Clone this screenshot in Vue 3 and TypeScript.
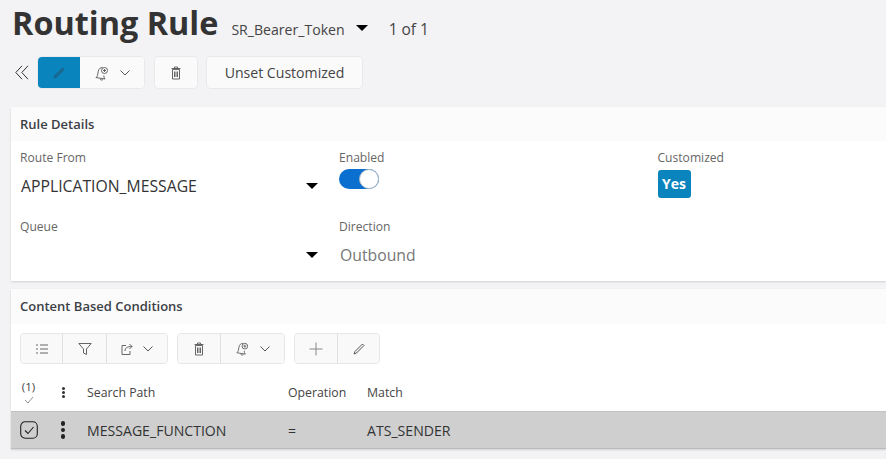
<script setup lang="ts">
const columns: { label: string; value: string; width: string }[] = [
  { label: 'Search Path', value: 'MESSAGE_FUNCTION', width: '201px' },
  { label: 'Operation', value: '=', width: '79px' },
  { label: 'Match', value: 'ATS_SENDER', width: '120px' },
]
</script>

<template>
  <div class="page">
    <header class="title-row">
      <h1>Routing Rule</h1>
      <span class="record">SR_Bearer_Token</span>
      <span class="tri title-tri"></span>
      <span class="count">1 of 1</span>
    </header>

    <div class="toolbar">
      <svg class="collapse" width="14" height="15" viewBox="0 0 14 15" fill="none" stroke="#333" stroke-width="1">
        <path d="M7 .8.800 7.500 7 14.200M13 .8 6.800 7.500 13 14.200" />
      </svg>
      <div class="btn-group">
        <button class="btn primary w42">
          <svg width="14" height="14" viewBox="0 0 14 14" fill="#1f6d94" stroke="#17587a" stroke-width=".8"><path d="M2 12 3 9.500 10.500 2l1.500 1.500L4.500 11z" /></svg>
        </button>
        <button class="btn w64">
          <svg width="16" height="16" viewBox="0 0 16 16" fill="none" stroke="#555" stroke-width=".9"><path d="M2 12.500c1.500-1 1.800-3 2.200-6C4.600 4 6.500 2.300 8.500 2.500M2 12.500l9 1.500c-.8-1-1.200-2.200-1.200-3.500M6 14a1.800 1.800 0 0 0 3 .4" /><circle cx="10.500" cy="5.500" r="3" /><path d="M10.500 4v3M9 5.500h3" /></svg>
          <svg class="chev" width="10" height="6" viewBox="0 0 10 6" fill="none" stroke="#555"><path d="m.5.500 4.500 4.500L9.500.5" /></svg>
        </button>
      </div>
      <button class="btn single w42 gap-l">
        <svg width="14" height="14" viewBox="0 0 14 14" fill="none" stroke="#666"><path d="M3.500 3.500h7V13h-7zM2.500 2.500h9M5.500 2.500V1h3v1.500M5.500 5.500V11M7 5.500V11M8.500 5.500V11" /></svg>
      </button>
      <button class="btn single text-btn">Unset Customized</button>
    </div>

    <section class="card details">
      <h2>Rule Details</h2>
      <div class="form-grid">
        <div class="field">
          <label>Route From</label>
          <div class="select"><span>APPLICATION_MESSAGE</span><i class="tri"></i></div>
        </div>
        <div class="field">
          <label>Enabled</label>
          <div class="toggle"><span class="knob"></span></div>
        </div>
        <div class="field">
          <label>Customized</label>
          <span class="badge">Yes</span>
        </div>
        <div class="field">
          <label>Queue</label>
          <div class="select"><span></span><i class="tri"></i></div>
        </div>
        <div class="field">
          <label>Direction</label>
          <div class="readonly">Outbound</div>
        </div>
      </div>
    </section>

    <section class="card conditions">
      <h2 class="tall">Content Based Conditions</h2>
      <div class="table-tools">
        <div class="btn-group grey">
          <button class="btn w41">
            <svg width="14" height="14" viewBox="0 0 14 14" fill="none" stroke="#666"><path d="M5 3h8M5 7h8M5 11h8M1 3h2M1 7h2M1 11h2" /></svg>
          </button>
          <button class="btn w44">
            <svg width="14" height="14" viewBox="0 0 14 14" fill="none" stroke="#666"><path d="M.8 1.500h12.400L8.500 7v5.500l-3-1.500V7z" /></svg>
          </button>
          <button class="btn w61">
            <svg width="12" height="12" viewBox="0 0 12 12" fill="none" stroke="#666"><path d="M5 2.500H1v9h8V8M4 8c0-3 2-4.500 7-4.500M8.500 1 11 3.500 8.500 6" /></svg>
            <svg class="chev" width="10" height="6" viewBox="0 0 10 6" fill="none" stroke="#555"><path d="m.5.500 4.500 4.500L9.500.5" /></svg>
          </button>
        </div>
        <div class="btn-group grey">
          <button class="btn w42">
            <svg width="14" height="14" viewBox="0 0 14 14" fill="none" stroke="#666"><path d="M3.500 3.500h7V13h-7zM2.500 2.500h9M5.500 2.500V1h3v1.500M5.500 5.500V11M7 5.500V11M8.500 5.500V11" /></svg>
          </button>
          <button class="btn w64">
            <svg width="15" height="15" viewBox="0 0 16 16" fill="none" stroke="#555" stroke-width=".9"><path d="M2 12.500c1.500-1 1.800-3 2.200-6C4.600 4 6.500 2.300 8.500 2.500M2 12.500l9 1.500c-.8-1-1.200-2.200-1.200-3.500M6 14a1.800 1.800 0 0 0 3 .4" /><circle cx="10.500" cy="5.500" r="3" /><path d="M10.500 4v3M9 5.500h3" /></svg>
            <svg class="chev" width="10" height="6" viewBox="0 0 10 6" fill="none" stroke="#555"><path d="m.5.500 4.500 4.500L9.500.5" /></svg>
          </button>
        </div>
        <div class="btn-group grey">
          <button class="btn w42">
            <svg width="14" height="14" viewBox="0 0 14 14" fill="none" stroke="#888"><path d="M7 .5v13M.5 7h13" /></svg>
          </button>
          <button class="btn w42">
            <svg width="14" height="14" viewBox="0 0 14 14" fill="none" stroke="#555"><path d="M2 12 3 9.500 10.500 2l1.500 1.500L4.500 11z" /></svg>
          </button>
        </div>
      </div>

      <div class="table-head">
        <div class="sel-col">
          <span class="sel-count">(1)</span>
          <svg class="head-check" width="10" height="8" viewBox="0 0 10 8" fill="none" stroke="#777" stroke-width=".8"><path d="m1 4 3 3 5-6" /></svg>
        </div>
        <div class="menu-col"><span class="dots small"><i></i><i></i><i></i></span></div>
        <div v-for="c in columns" :key="c.label" class="col" :style="{ width: c.width }">{{ c.label }}</div>
      </div>
      <div class="table-row">
        <div class="sel-col">
          <svg width="18" height="18" viewBox="0 0 18 18" fill="none" stroke="#222" stroke-width="1.100"><rect x=".7" y=".7" width="16.600" height="16.600" rx="4.500" /><path d="m5 9.500 3 3L13.500 6" /></svg>
        </div>
        <div class="menu-col"><span class="dots"><i></i><i></i><i></i></span></div>
        <div v-for="c in columns" :key="c.label" class="col cell" :style="{ width: c.width }">{{ c.value }}</div>
      </div>
    </section>
  </div>
</template>

<style>
html, body { margin: 0; background: #f3f2f4; overflow: hidden; }
</style>

<style scoped>
.page {
  width: 886px;
  height: 459px;
  overflow: hidden;
  font-family: "Open Sans", sans-serif;
  color: #444;
  background: #f3f2f4;
}
.title-row { display: flex; align-items: baseline; height: 47px; padding-left: 12px; box-sizing: border-box; }
h1 { margin: 0; font-size: 32.400px; line-height: 45px; font-weight: 700; color: #333; }
.record { margin-left: 13px; font-size: 14.100px; }
.tri { display: inline-block; width: 0; height: 0; border: 6px solid transparent; border-top: 6px solid #000; border-bottom: 0; }
.title-tri { margin-left: 11px; position: relative; top: -4px; }
.count { margin-left: 21px; font-size: 15.500px; }
.toolbar { display: flex; align-items: center; height: 31px; margin-top: 10px; padding-left: 15px; }
.collapse { margin-right: 9px; }
.btn-group { display: flex; border-radius: 4px; box-shadow: 0 0 0 1px #e9e8eb; background: #fafafb; overflow: hidden; }
.btn {
  display: flex; align-items: center; justify-content: center; gap: 10px;
  height: 31px; padding: 0; border: 0; background: #fafafb; box-sizing: border-box;
  font-family: inherit; color: #444;
}
.primary { background: #0a84bd; }
.w41 { width: 41px; }
.w42 { width: 42px; }
.w44 { width: 44px; }
.w61 { width: 61px; }
.w64 { width: 64px; }
.single { border-radius: 4px; box-shadow: 0 0 0 1px #e9e8eb; }
.gap-l { margin-left: 11px; }
.text-btn { margin-left: 10px; width: 155px; font-size: 14.100px; }
.card { background: #fff; margin: 0 0 0 11px; box-shadow: 0 1px 2px rgba(0,0,0,.14); }
.details { height: 174px; margin-top: 19px; }
.conditions { height: 160px; margin-top: 8px; }
h2 {
  margin: 0; height: 34px; line-height: 34px; padding-left: 9px; font-size: 13px; font-weight: 600;
  color: #3b4046; background: #fbfbfb; box-sizing: border-box;
}
h2.tall { height: 35px; line-height: 35px; }
.form-grid { display: grid; grid-template-columns: 319px 318.500px 1fr; grid-template-rows: 69px 69px; padding: 9px 0 0 9px; }
.field { display: flex; flex-direction: column; align-items: flex-start; }
label { font-size: 12.100px; line-height: 16px; color: #666; }
.select { display: flex; align-items: center; justify-content: space-between; width: 298px; height: 28px; margin-top: 6px; padding-left: 1px; box-sizing: border-box; font-size: 15.750px; color: #333; }
.readonly { margin-top: 6px; padding-left: 1px; line-height: 28px; font-size: 15.750px; color: #777; }
.toggle { position: relative; width: 40px; height: 20px; margin-top: 3px; border-radius: 10px; background: #0a6fcf; }
.knob { position: absolute; right: 0; top: 0; width: 20px; height: 20px; box-sizing: border-box; border: 1px solid #a9b6c4; border-radius: 50%; background: #fff; }
.badge { margin-top: 4px; width: 33px; height: 28px; line-height: 27px; text-align: center; border-radius: 3px; background: #0a84bd; color: #fff; font-weight: 700; font-size: 14px; }
.table-tools { display: flex; gap: 9px; padding: 9px 0 0 9px; }
.grey { box-shadow: none; border: 1px solid #e6e5e8; }
.grey .btn { background: #f9f9fa; height: 29px; }
.grey .btn + .btn { border-left: 1px solid #e0dfe2; }
.table-head { display: flex; align-items: center; height: 47px; padding-top: 9px; box-sizing: border-box; }
.table-row { display: flex; align-items: center; height: 38px; background: #cfcfcf; border-top: 1px solid #c2c2c2; border-bottom: 1px solid #bbb; box-sizing: border-box; }
.sel-col { width: 36px; display: flex; flex-direction: column; align-items: center; padding-right: 1px; box-sizing: border-box; }
.sel-count { font-size: 11.500px; line-height: 14px; color: #444; }
.head-check { margin-top: 2px; }
.menu-col { width: 40px; display: flex; justify-content: center; box-sizing: border-box; padding-right: 8px; }
.dots { display: flex; flex-direction: column; gap: 2px; }
.dots i { width: 4.500px; height: 4.500px; border-radius: 50%; background: #222; }
.dots.small { gap: 1px; }
.dots.small i { width: 3px; height: 3px; background: #333; }
.col { font-size: 12.300px; color: #444; }
.cell { font-size: 14.100px; color: #333; }
</style>
